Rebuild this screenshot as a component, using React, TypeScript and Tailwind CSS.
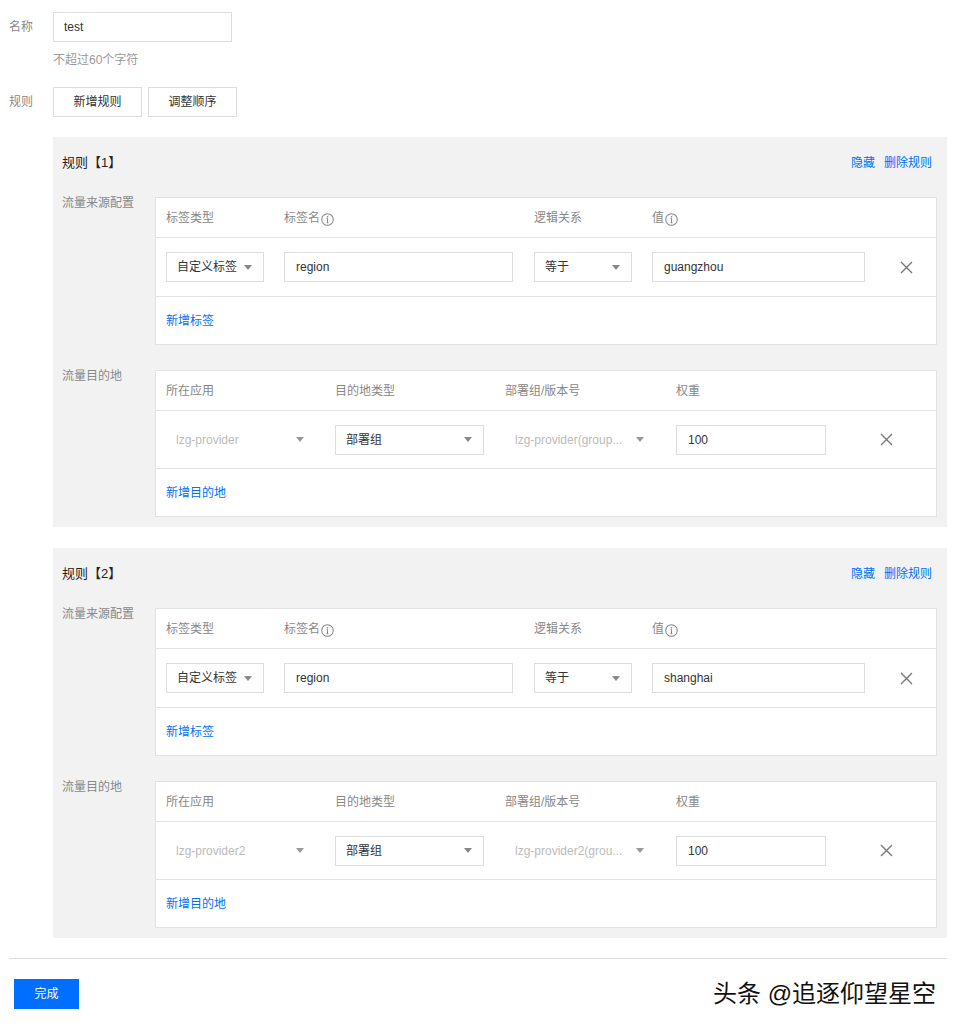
import React from 'react';

const font = "font-['Liberation_Sans','Noto_Sans_CJK_SC',sans-serif]";

function Caret({ light }: { light?: boolean }) {
  return (
    <svg width="8" height="5" viewBox="0 0 8 5" className="shrink-0">
      <path d="M0 0h8L4 5z" fill={light ? '#999' : '#888'} />
    </svg>
  );
}

function InfoIcon() {
  return (
    <svg width="13" height="13" viewBox="0 0 14 14" className="ml-[1px] mt-[3px] shrink-0">
      <circle cx="7" cy="7" r="6.2" fill="none" stroke="#888" strokeWidth="1.1" />
      <circle cx="7" cy="4" r="0.9" fill="#888" />
      <path d="M7 6v4.6M6 6h1M6 10.6h2" stroke="#888" strokeWidth="1.1" fill="none" />
    </svg>
  );
}

function CloseIcon() {
  return (
    <svg width="13" height="13" viewBox="0 0 13 13" className="shrink-0">
      <path d="M1 1l11 11M12 1L1 12" stroke="#777" strokeWidth="1.4" />
    </svg>
  );
}

function Select({ value, width, disabled }: { value: string; width: string; disabled?: boolean }) {
  return (
    <div
      className={`${width} h-[30px] flex items-center justify-between pl-[10px] pr-[11px] ${
        disabled ? 'text-[#bbb]' : 'border border-[#ddd] bg-white text-[#333]'
      }`}
    >
      <span className="truncate pr-[2px]">{value}</span>
      <Caret light={disabled} />
    </div>
  );
}

function Input({ value, width }: { value: string; width: string }) {
  return (
    <div className={`${width} h-[30px] flex items-center px-[11px] border border-[#ddd] bg-white text-[#333]`}>
      {value}
    </div>
  );
}

function Head({ label, width, info }: { label: string; width: string; info?: boolean }) {
  return (
    <div className={`${width} flex items-center shrink-0`}>
      <span>{label}</span>
      {info && <InfoIcon />}
    </div>
  );
}

type Rule = {
  idx: number;
  value: string;
  app: string;
  group: string;
};

function RulePanel({ rule }: { rule: Rule }) {
  return (
    <div className="ml-[44px] w-[894px] bg-[#f2f2f2] pl-[9px] pr-[10px] pt-[17px] pb-[10px]">
      <div className="flex items-center justify-between h-[18px]">
        <span className="text-[13px] text-[#222]">规则【{rule.idx}】</span>
        <div className="flex gap-[9px] text-[#006eff] pr-[5px]">
          <span>隐藏</span>
          <span>删除规则</span>
        </div>
      </div>

      {/* 流量来源配置 */}
      <div className="mt-[25px] flex">
        <div className="w-[93px] leading-[12px] text-[#888]">流量来源配置</div>
        <div className="w-[782px] border border-[#e2e2e2] bg-white">
          <div className="h-[40px] flex items-center pl-[10px] border-b border-[#e2e2e2] text-[#888]">
            <Head label="标签类型" width="w-[118px]" />
            <Head label="标签名" width="w-[250px]" info />
            <Head label="逻辑关系" width="w-[118px]" />
            <Head label="值" width="w-[213px]" info />
          </div>
          <div className="h-[59px] flex items-center pl-[10px] border-b border-[#e2e2e2]">
            <Select value="自定义标签" width="w-[98px]" />
            <div className="ml-[20px]">
              <Input value="region" width="w-[229px]" />
            </div>
            <div className="ml-[21px]">
              <Select value="等于" width="w-[98px]" />
            </div>
            <div className="ml-[20px]">
              <Input value={rule.value} width="w-[213px]" />
            </div>
            <div className="ml-[35px]">
              <CloseIcon />
            </div>
          </div>
          <div className="h-[47px] flex items-center pl-[10px] text-[#006eff]">新增标签</div>
        </div>
      </div>

      {/* 流量目的地 */}
      <div className="mt-[25px] flex">
        <div className="w-[93px] leading-[12px] text-[#888]">流量目的地</div>
        <div className="w-[782px] border border-[#e2e2e2] bg-white">
          <div className="h-[40px] flex items-center pl-[10px] border-b border-[#e2e2e2] text-[#888]">
            <Head label="所在应用" width="w-[169px]" />
            <Head label="目的地类型" width="w-[170px]" />
            <Head label="部署组/版本号" width="w-[171px]" />
            <Head label="权重" width="w-[150px]" />
          </div>
          <div className="h-[58px] flex items-center pl-[10px] border-b border-[#e2e2e2]">
            <Select value={rule.app} width="w-[149px]" disabled />
            <div className="ml-[20px]">
              <Select value="部署组" width="w-[149px]" />
            </div>
            <div className="ml-[21px]">
              <Select value={rule.group} width="w-[150px]" disabled />
            </div>
            <div className="ml-[21px]">
              <Input value="100" width="w-[150px]" />
            </div>
            <div className="ml-[54px]">
              <CloseIcon />
            </div>
          </div>
          <div className="h-[47px] flex items-center pl-[10px] text-[#006eff]">新增目的地</div>
        </div>
      </div>
    </div>
  );
}

const rules: Rule[] = [
  { idx: 1, value: 'guangzhou', app: 'lzg-provider', group: 'lzg-provider(group...' },
  { idx: 2, value: 'shanghai', app: 'lzg-provider2', group: 'lzg-provider2(grou...' },
];

export default function App() {
  return (
    <div className={`relative ${font} text-[12px] leading-[18px] bg-white min-h-[1028px] pt-[12px] pl-[9px]`}>
      <div className="flex items-center">
        <div className="w-[44px] text-[#888]">名称</div>
        <div className="w-[179px] h-[30px] flex items-center px-[10px] border border-[#ddd] text-[#333]">test</div>
      </div>
      <div className="ml-[44px] mt-[9px] text-[#999]">不超过60个字符</div>

      <div className="mt-[18px] flex items-center">
        <div className="w-[44px] text-[#888]">规则</div>
        <button className="w-[89px] h-[30px] border border-[#ddd] bg-white text-[#333]">新增规则</button>
        <button className="ml-[6px] w-[89px] h-[30px] border border-[#ddd] bg-white text-[#333]">调整顺序</button>
      </div>

      <div className="mt-[20px] flex flex-col gap-[21px]">
        {rules.map((r) => (
          <RulePanel key={r.idx} rule={r} />
        ))}
      </div>

      <div className="mt-[20px] w-[938px] border-t border-[#ddd]" />

      <button className="mt-[20px] ml-[5px] w-[65px] h-[30px] bg-[#006eff] text-white">完成</button>

      {/* watermark */}
      <div className="absolute left-[713px] top-[978px] text-[24px] leading-[32px] text-[#111] [text-shadow:1px_1px_0_#fff,-1px_-1px_0_#fff,1px_-1px_0_#fff,-1px_1px_0_#fff]">
        头条 @追逐仰望星空
      </div>
    </div>
  );
}
